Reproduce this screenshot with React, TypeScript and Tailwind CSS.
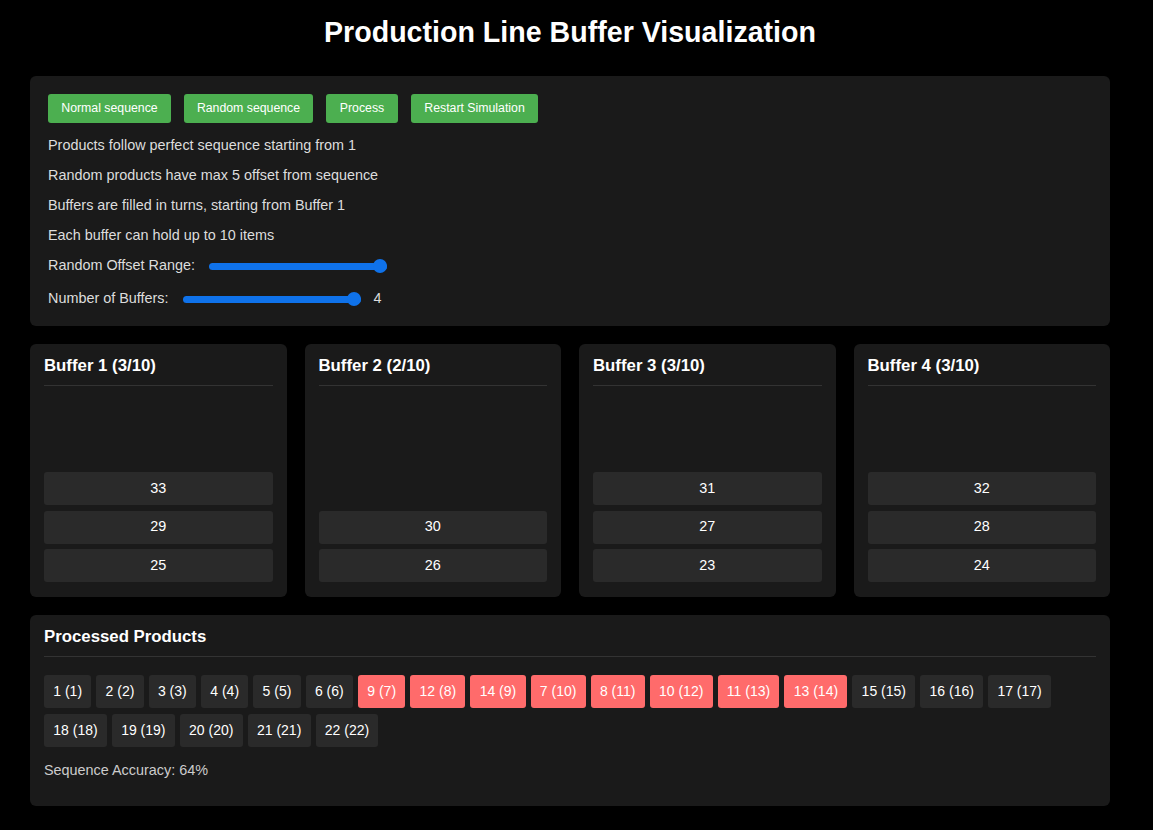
import React from 'react';

const buttons = [
    { label: 'Normal sequence', w: 'w-[123px]' },
    { label: 'Random sequence', w: 'w-[129px]' },
    { label: 'Process', w: 'w-[72px]' },
    { label: 'Restart Simulation', w: 'w-[127px]' },
];

const notes = [
    'Products follow perfect sequence starting from 1',
    'Random products have max 5 offset from sequence',
    'Buffers are filled in turns, starting from Buffer 1',
    'Each buffer can hold up to 10 items',
];

const buffers = [
    { name: 'Buffer 1', items: [33, 29, 25] },
    { name: 'Buffer 2', items: [30, 26] },
    { name: 'Buffer 3', items: [31, 27, 23] },
    { name: 'Buffer 4', items: [32, 28, 24] },
];

// [value, position]
const processed: [number, number][] = [
    [1, 1], [2, 2], [3, 3], [4, 4], [5, 5], [6, 6], [9, 7], [12, 8], [14, 9], [7, 10], [8, 11],
    [10, 12], [11, 13], [13, 14], [15, 15], [16, 16], [17, 17], [18, 18], [19, 19], [20, 20], [21, 21], [22, 22],
];

const Slider = ({ className }: { className: string }) => (
    <div className={`relative h-[14px] flex items-center ${className}`}>
        <div className="h-[7px] w-full rounded-full bg-[#0f72ea]"></div>
        <div className="absolute right-0 top-0 h-[14px] w-[14px] rounded-full bg-[#0f72ea]"></div>
    </div>
);

const App = () => {
    return (
        <div className="min-h-screen bg-black text-[#ddd] font-['Liberation_Sans',Arial,sans-serif] text-[14.4px] pl-[30px] pt-[16px] pb-[25px]">
            <div className="w-[1080px]">
                <h1 className="text-center text-[28.6px] font-bold leading-[32px] text-white mb-[28px]">Production Line Buffer Visualization</h1>

                <div className="bg-[#1a1a1a] rounded-[6px] p-[18px]">
                    <div className="flex gap-[13px]">
                        {buttons.map((b) => (
                            <button key={b.label} className={`${b.w} h-[29px] bg-[#4caf50] text-white text-[12.3px] rounded-[3px]`}>
                                {b.label}
                            </button>
                        ))}
                    </div>
                    {notes.map((n) => (
                        <p key={n} className="mt-[14px] leading-4 h-4">{n}</p>
                    ))}
                    <div className="mt-[14px] h-[18px] flex items-center">
                        <span>Random Offset Range:</span>
                        <Slider className="ml-[14px] w-[178px]" />
                    </div>
                    <div className="mt-[15px] h-[18px] flex items-center">
                        <span>Number of Buffers:</span>
                        <Slider className="ml-[14px] w-[178px]" />
                        <span className="ml-[13px]">4</span>
                    </div>
                </div>

                <div className="grid grid-cols-4 gap-[18px] mt-[18px]">
                    {buffers.map((b) => (
                        <div key={b.name} className="bg-[#1a1a1a] rounded-[6px] h-[253px] px-[14px] pt-[12px] pb-[15px] flex flex-col">
                            <h3 className="text-[16.8px] font-bold text-white leading-[19px] pb-[10px] border-b border-[#333]">
                                {b.name} ({b.items.length}/10)
                            </h3>
                            <div className="flex-1 flex flex-col justify-end gap-[5.5px]">
                                {b.items.map((v) => (
                                    <div key={v} className="h-[33px] flex items-center justify-center bg-[#2a2a2a] rounded-[3px] text-white">
                                        {v}
                                    </div>
                                ))}
                            </div>
                        </div>
                    ))}
                </div>

                <div className="bg-[#1a1a1a] rounded-[6px] mt-[18px] px-[14px] pt-[12px] pb-[28px]">
                    <h3 className="text-[16.8px] font-bold text-white leading-[19px] pb-[10px] border-b border-[#333]">Processed Products</h3>
                    <div className="flex flex-wrap gap-x-[5px] gap-y-[6px] mt-[18px] text-[14px]">
                        {processed.map(([v, pos]) => (
                            <div
                                key={pos}
                                className={`h-[33px] px-[9.25px] flex items-center rounded-[3px] text-white ${v === pos ? 'bg-[#2a2a2a]' : 'bg-[#ff6b6b]'}`}
                            >
                                {v} ({pos})
                            </div>
                        ))}
                    </div>
                    <p className="mt-[15px] leading-4 text-[#ccc]">Sequence Accuracy: 64%</p>
                </div>
            </div>
        </div>
    );
};

export default App;
